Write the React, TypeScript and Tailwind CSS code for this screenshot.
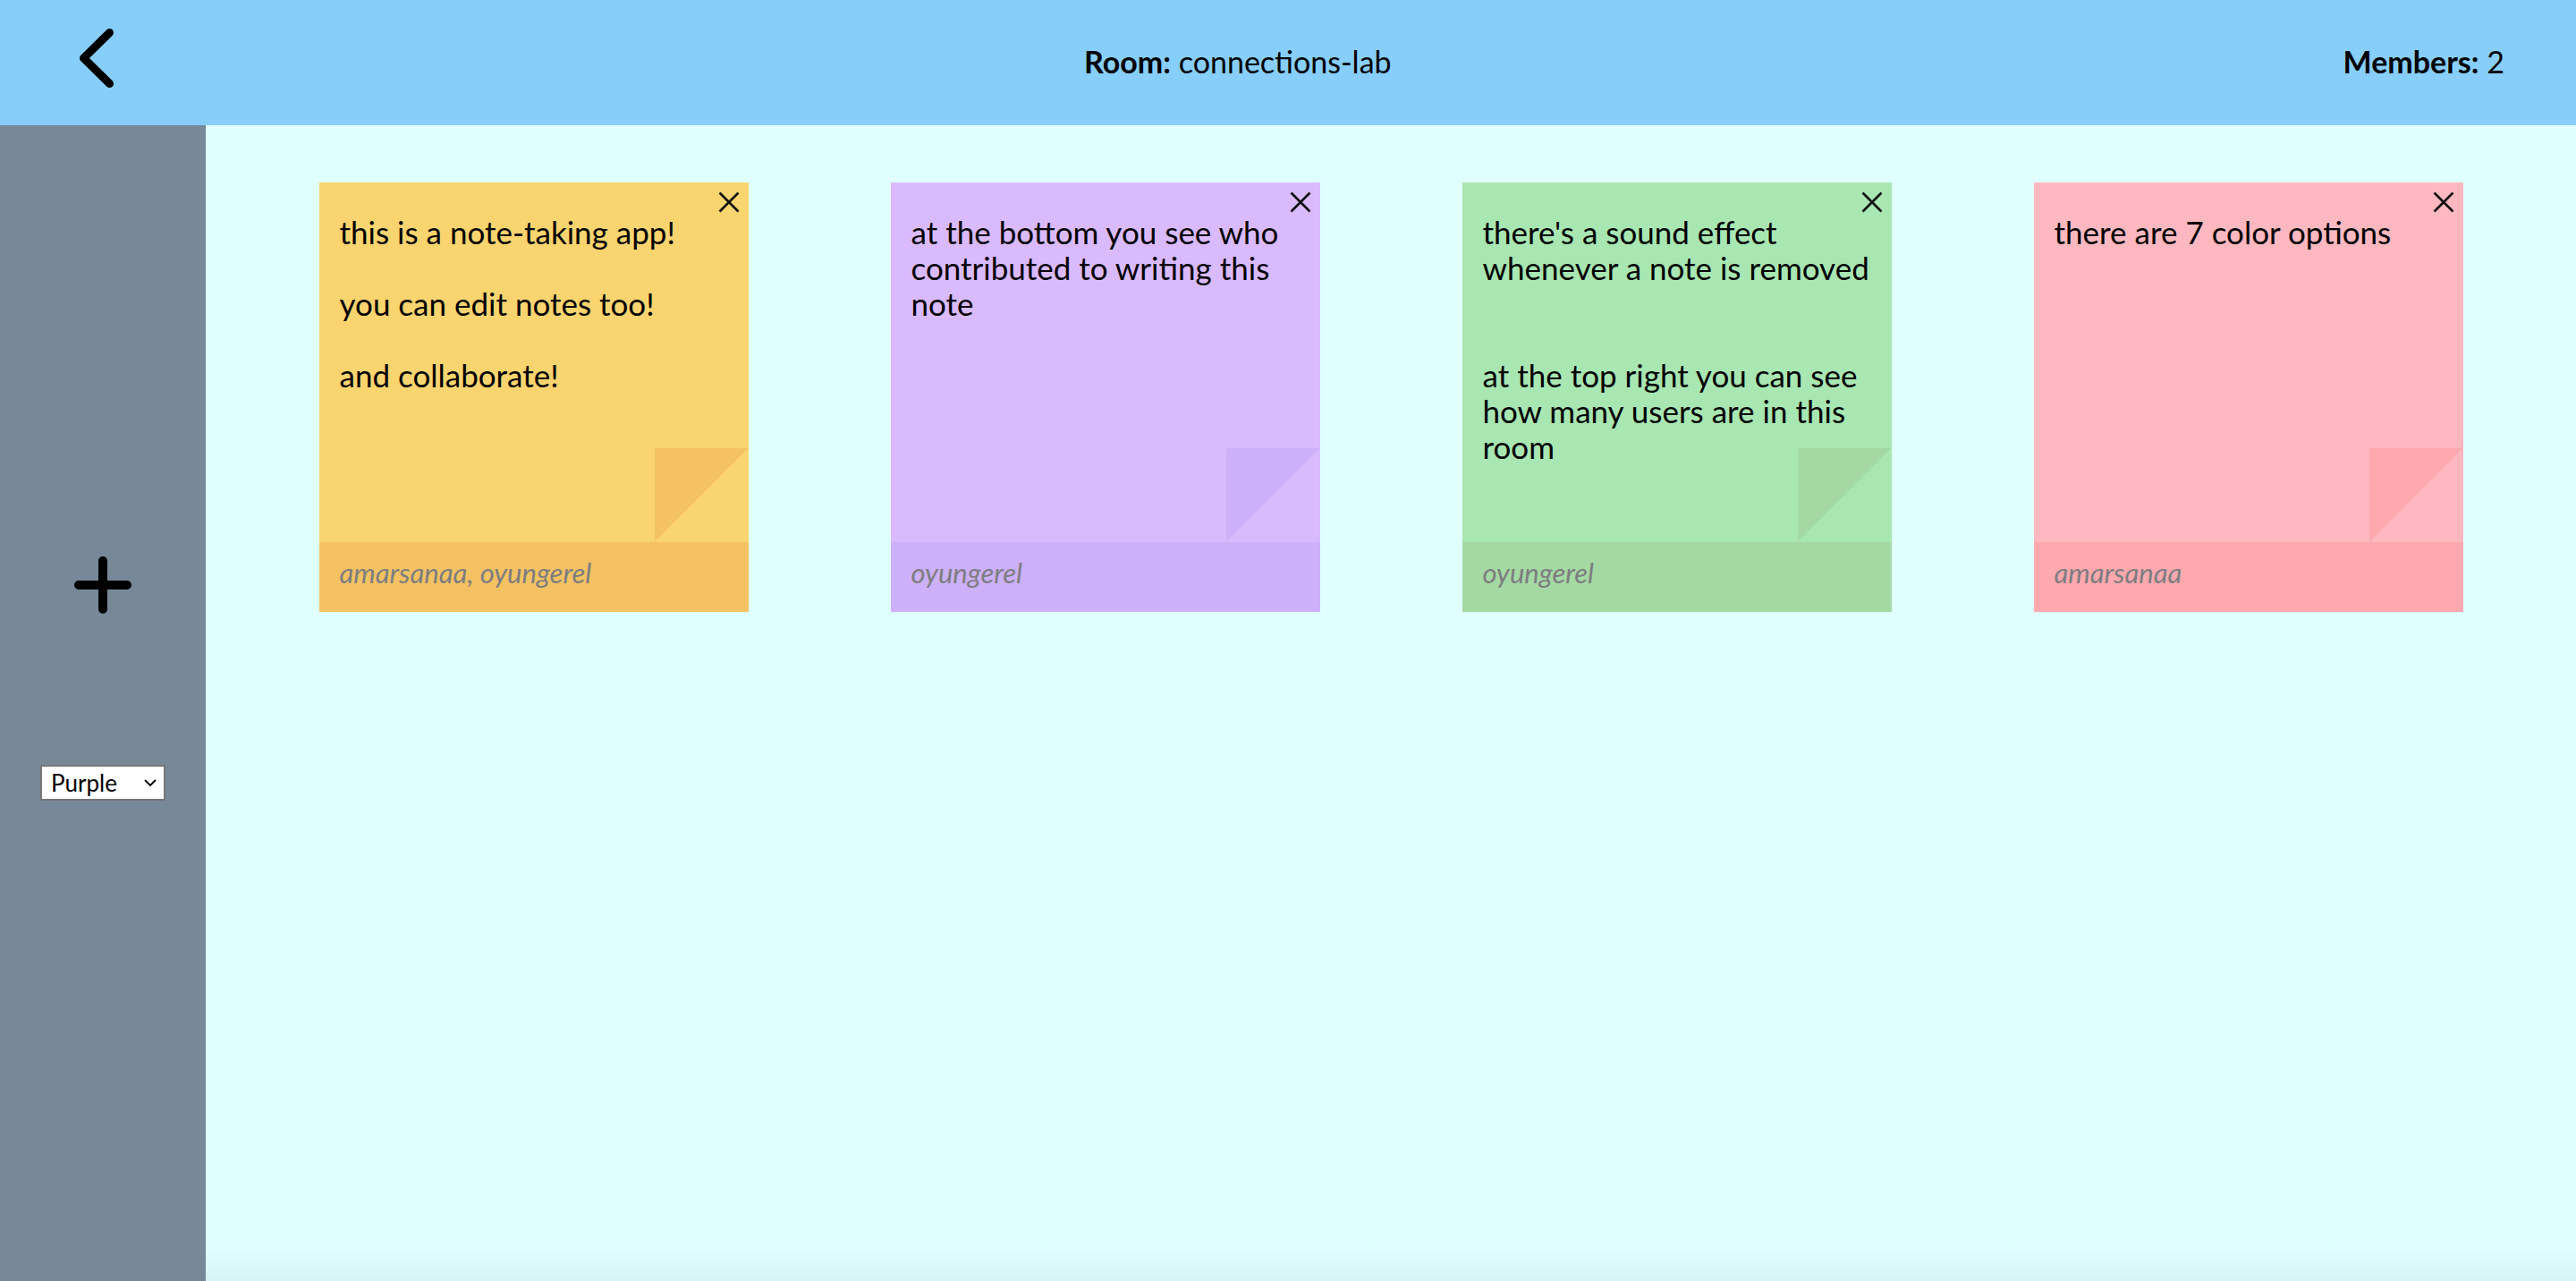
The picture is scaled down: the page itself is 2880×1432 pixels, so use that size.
import React from "react"

type Note = {
  lines: string[]
  authors: string
  bg: string
  shade: string
}

const notes: Note[] = [
  {
    lines: ["this is a note-taking app!", "", "you can edit notes too!", "", "and collaborate!"],
    authors: "amarsanaa, oyungerel",
    bg: "bg-[#fad46f]",
    shade: "bg-[#f4c262]",
  },
  {
    lines: ["at the bottom you see who", "contributed to writing this", "note"],
    authors: "oyungerel",
    bg: "bg-[#dabafe]",
    shade: "bg-[#cdb0fa]",
  },
  {
    lines: [
      "there's a sound effect",
      "whenever a note is removed",
      "",
      "",
      "at the top right you can see",
      "how many users are in this",
      "room",
    ],
    authors: "oyungerel",
    bg: "bg-[#a8e6b2]",
    shade: "bg-[#a4d9a3]",
  },
  {
    lines: ["there are 7 color options"],
    authors: "amarsanaa",
    bg: "bg-[#ffb8bf]",
    shade: "bg-[#ffa9af]",
  },
]

function StickyNote({ note }: { note: Note }) {
  return (
    <div className={`relative flex flex-col w-[480px] h-[480px] shrink-0 ${note.bg}`}>
      {/* close button */}
      <button className="absolute top-[10px] right-[10px] w-[24px] h-[24px] z-10">
        <svg width="24" height="24" viewBox="0 0 24 24">
          <path d="M1.5 1.5 L22.5 22.5 M22.5 1.5 L1.5 22.5" stroke="#111" strokeWidth="2.6" />
        </svg>
      </button>

      <div className="flex flex-col flex-1 min-h-0">
        <div className="flex-1 min-h-0 pl-[23px] pt-[35px] text-[35px] leading-[40px] text-black">
          {note.lines.map((line, i) => (
            <div key={i} className="whitespace-nowrap h-[40px]">
              {line}
            </div>
          ))}
        </div>
        {/* folded corner */}
        <div className="flex justify-end shrink-0">
          <div className={`w-[105px] h-[105px] ${note.shade} [clip-path:polygon(0_0,100%_0,0_100%)]`}></div>
        </div>
      </div>

      <div className={`h-[78px] shrink-0 flex items-center pl-[23px] pb-[9px] ${note.shade}`}>
        <span className="italic text-[31px] text-[#7d7d80]">{note.authors}</span>
      </div>
    </div>
  )
}

export default function App() {
  return (
    <div className="flex flex-col h-screen font-['Lato',sans-serif] text-black">
      <header className="flex items-center h-[140px] shrink-0 bg-[#87cefa] pl-[84px] pr-[80px]">
        <button className="shrink-0">
          <svg width="48" height="72" viewBox="0 0 48 72" className="block -translate-y-[5px]">
            <path
              d="M38.5 7.5 L9.5 36 L38.5 64.5"
              fill="none"
              stroke="#000"
              strokeWidth="9"
              strokeLinecap="round"
              strokeLinejoin="round"
            />
          </svg>
        </button>
        <div className="ml-[1080px] text-[34px] -translate-y-[2px]">
          <span className="font-bold">Room:</span> connections-lab
        </div>
        <div className="ml-auto text-[34px] -translate-y-[2px]">
          <span className="font-bold">Members:</span> 2
        </div>
      </header>

      <div className="flex flex-1 min-h-0">
        <aside className="w-[230px] shrink-0 bg-[#778899] flex flex-col items-center pt-[482px]">
          <button>
            <svg width="64" height="64" viewBox="0 0 64 64" className="block">
              <path d="M32 5 V59 M5 32 H59" stroke="#000" strokeWidth="10" strokeLinecap="round" />
            </svg>
          </button>
          <div className="mt-[169px] w-[140px] h-[40px] bg-white border-2 border-[#767676] flex items-center pl-[10px] pr-[8px]">
            <span className="text-[26px] leading-none">Purple</span>
            <svg width="14" height="8" viewBox="0 0 14 8" className="ml-auto">
              <path d="M1 1 L7 7 L13 1" fill="none" stroke="#000" strokeWidth="1.8" />
            </svg>
          </div>
        </aside>

        <main className="flex-1 flex flex-col bg-[#e0ffff] pt-[64px]">
          <div className="flex justify-center gap-[159px]">
            {notes.map((n, i) => (
              <StickyNote key={i} note={n} />
            ))}
          </div>
          {/* faint shade along the bottom edge */}
          <div className="mt-auto h-[40px] bg-gradient-to-b from-transparent to-[#d6f3f3]"></div>
        </main>
      </div>
    </div>
  )
}
